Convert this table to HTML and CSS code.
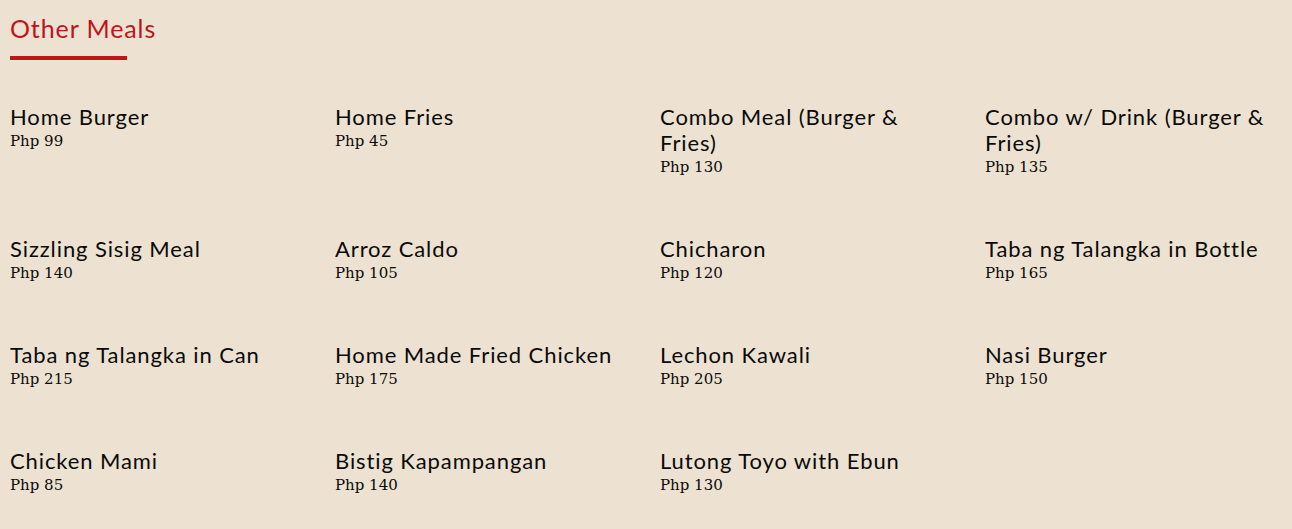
FILE: index.html
```html
<!DOCTYPE html>
<html>
<head>
<meta charset="utf-8">
<link rel="stylesheet" href="styles.css">
</head>
<body>
<section class="menu">
  <h2 class="menu-title">Other Meals</h2>
  <div class="menu-grid">
    <div class="item"><div class="name">Home Burger</div><div class="price">Php 99</div></div>
    <div class="item"><div class="name">Home Fries</div><div class="price">Php 45</div></div>
    <div class="item"><div class="name">Combo Meal (Burger &amp; Fries)</div><div class="price">Php 130</div></div>
    <div class="item"><div class="name">Combo w/ Drink (Burger &amp; Fries)</div><div class="price">Php 135</div></div>
    <div class="item"><div class="name">Sizzling Sisig Meal</div><div class="price">Php 140</div></div>
    <div class="item"><div class="name">Arroz Caldo</div><div class="price">Php 105</div></div>
    <div class="item"><div class="name">Chicharon</div><div class="price">Php 120</div></div>
    <div class="item"><div class="name">Taba ng Talangka in Bottle</div><div class="price">Php 165</div></div>
    <div class="item"><div class="name">Taba ng Talangka in Can</div><div class="price">Php 215</div></div>
    <div class="item"><div class="name">Home Made Fried Chicken</div><div class="price">Php 175</div></div>
    <div class="item"><div class="name">Lechon Kawali</div><div class="price">Php 205</div></div>
    <div class="item"><div class="name">Nasi Burger</div><div class="price">Php 150</div></div>
    <div class="item"><div class="name">Chicken Mami</div><div class="price">Php 85</div></div>
    <div class="item"><div class="name">Bistig Kapampangan</div><div class="price">Php 140</div></div>
    <div class="item"><div class="name">Lutong Toyo with Ebun</div><div class="price">Php 130</div></div>
  </div>
</section>
</body>
</html>
```
FILE: styles.css
```css
html, body {
  margin: 0;
  padding: 0;
  background: #ede2d1;
}
body {
  overflow: hidden;
}
.menu {
  padding: 13px 0 0 10px;
}
.menu-title {
  margin: 0;
  display: inline-block;
  font-family: "Lato", "Noto Sans", sans-serif;
  font-weight: 400;
  font-size: 25px;
  line-height: 30px;
  letter-spacing: 0.9px;
  color: #c0141b;
  padding-bottom: 13px;
  position: relative;
}
.menu-title::after {
  content: "";
  position: absolute;
  left: 0;
  bottom: -4px;
  width: 117px;
  height: 4px;
  background: #c0141b;
}
.menu-grid {
  margin-top: 48px;
  display: grid;
  grid-template-columns: repeat(4, 325px);
  row-gap: 58px;
}
.item {
  padding-right: 35px;
}
.name {
  font-family: "Lato", "Noto Sans", sans-serif;
  font-size: 22px;
  line-height: 26px;
  letter-spacing: 0.9px;
  color: #0a0a0a;
}
.price {
  font-family: "DejaVu Serif", "Liberation Serif", serif;
  font-size: 15px;
  line-height: 22px;
  color: #0a0a0a;
}
```
